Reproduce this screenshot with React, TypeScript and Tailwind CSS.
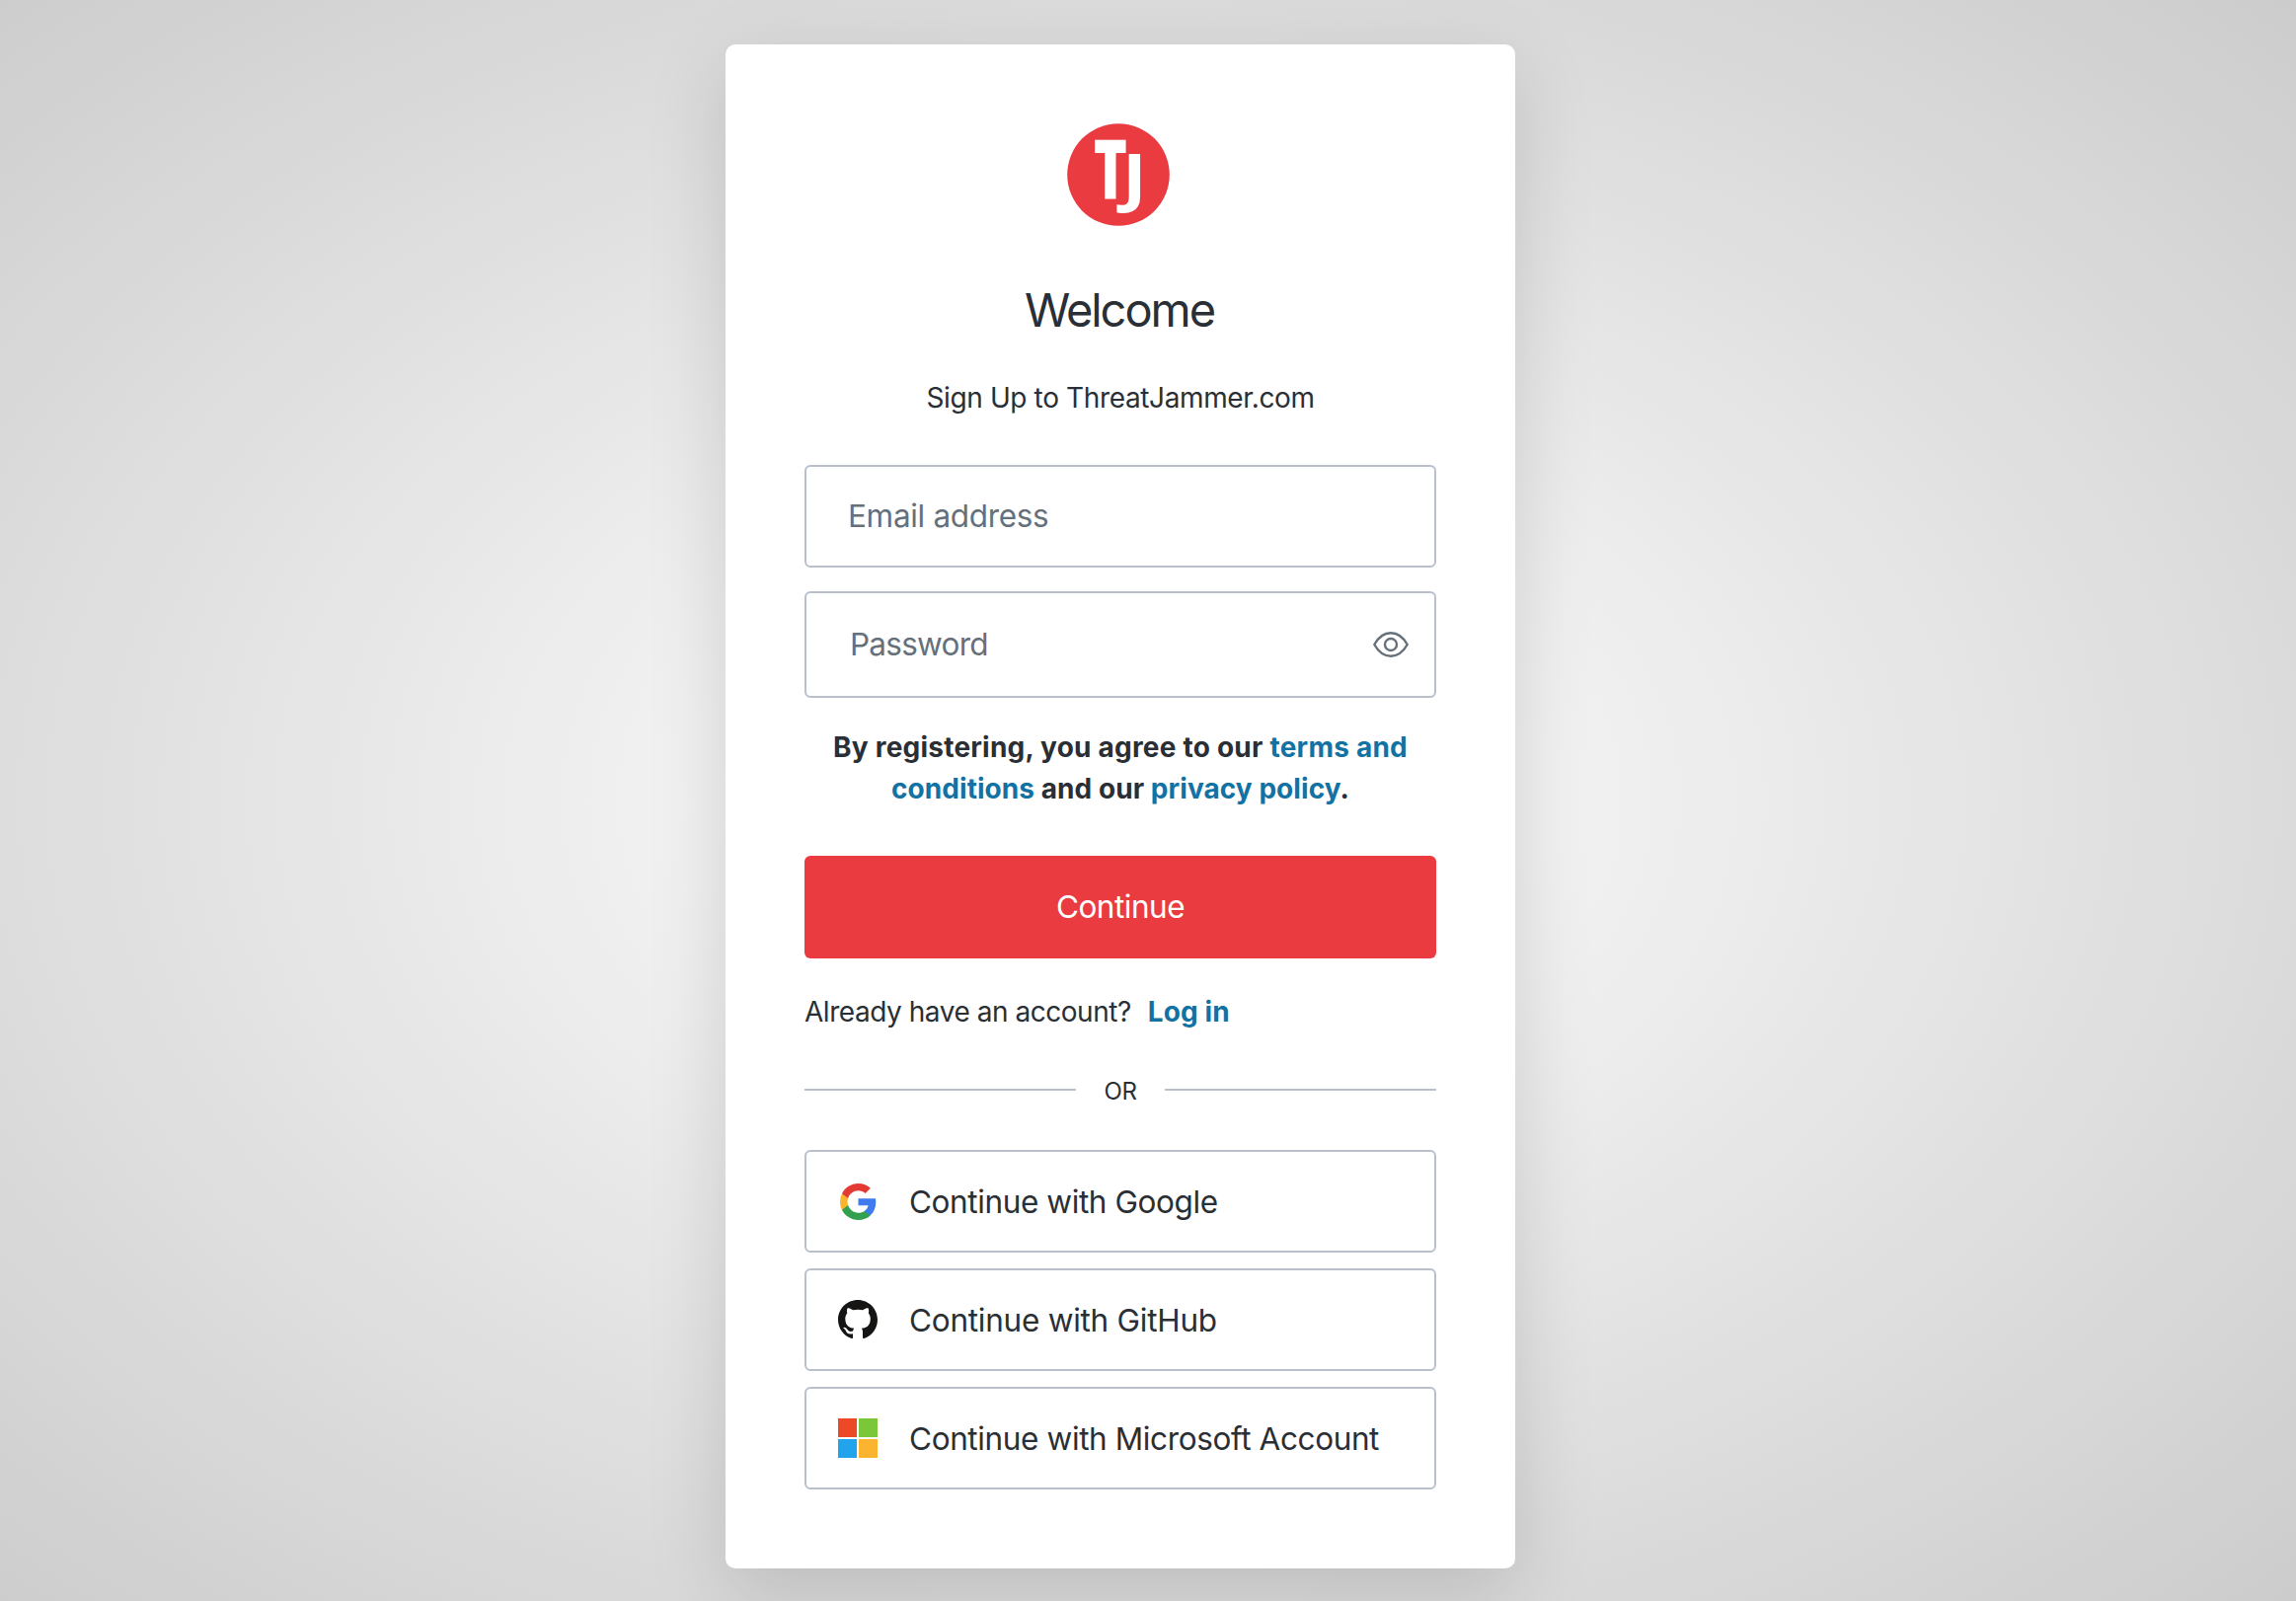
import type { ReactNode } from "react";

function Logo() {
  return (
    <svg className="block h-26 w-26 overflow-visible" viewBox="0 0 104 104" aria-label="ThreatJammer">
      <circle cx="52" cy="52" r="51.8" fill="#ea3b40" />
      <g fill="#fff" fontFamily="'Open Sans', sans-serif">
        <text transform="translate(26.7 76) scale(0.69 1)" fontSize="84" fontWeight="800">T</text>
        <text transform="translate(56 77) scale(1.15 1)" fontSize="65" fontWeight="700">J</text>
      </g>
    </svg>
  );
}

function EyeIcon() {
  return (
    <svg className="block h-[26px] w-9" viewBox="0 0 36 26" fill="none" stroke="#65707b" strokeWidth="2.4" strokeLinejoin="round">
      <path d="M1.3 13C5.5 5.5 10.5 1.3 18 1.3S30.5 5.5 34.7 13C30.5 20.5 25.5 24.7 18 24.7S5.5 20.5 1.3 13Z" />
      <circle cx="18" cy="13" r="6" />
    </svg>
  );
}

function GoogleIcon() {
  return (
    <svg className="block h-[37px] w-[37px]" viewBox="0 0 48 48">
      <path fill="#3f7bee" d="M47.1 24.55c0-1.64-.15-3.22-.42-4.73H24v9.02h12.95c-.58 2.96-2.25 5.47-4.78 7.15v6h7.73c4.52-4.18 7.2-10.33 7.2-17.44z" />
      <path fill="#32a04f" d="M24 48c6.48 0 11.93-2.13 15.89-5.81l-7.73-6c-2.15 1.45-4.92 2.3-8.16 2.3-6.26 0-11.57-4.22-13.47-9.91H2.56v6.19C6.51 42.62 14.62 48 24 48z" />
      <path fill="#fab52c" d="M10.53 28.58A14.5 14.5 0 0 1 9.75 24c0-1.59.28-3.14.76-4.59v-6.19H2.56A23.9 23.9 0 0 0 0 24c0 3.88.92 7.54 2.56 10.78z" />
      <path fill="#e43a34" d="M24 9.5c3.54 0 6.71 1.22 9.21 3.6l6.85-6.85C35.9 2.38 30.47 0 24 0 14.62 0 6.51 5.38 2.56 13.22l7.98 6.19C12.43 13.72 17.74 9.5 24 9.5z" />
    </svg>
  );
}

function GitHubIcon() {
  return (
    <svg className="block h-10 w-10" viewBox="0 0 16 16" fill="#161514">
      <path d="M8 0C3.58 0 0 3.58 0 8c0 3.54 2.29 6.53 5.47 7.59.4.07.55-.17.55-.38 0-.19-.01-.82-.01-1.49-2.01.37-2.53-.49-2.69-.94-.09-.23-.48-.94-.82-1.13-.28-.15-.68-.52-.01-.53.63-.01 1.08.58 1.23.82.72 1.21 1.87.87 2.33.66.07-.52.28-.87.51-1.07-1.78-.2-3.64-.89-3.64-3.95 0-.87.31-1.59.82-2.15-.08-.2-.36-1.02.08-2.12 0 0 .67-.21 2.2.82.64-.18 1.32-.27 2-.27s1.36.09 2 .27c1.53-1.04 2.2-.82 2.2-.82.44 1.1.16 1.92.08 2.12.51.56.82 1.27.82 2.15 0 3.07-1.87 3.75-3.65 3.95.29.25.54.73.54 1.48 0 1.07-.01 1.93-.01 2.2 0 .21.15.46.55.38A8.01 8.01 0 0 0 16 8c0-4.42-3.58-8-8-8z" />
    </svg>
  );
}

function MicrosoftIcon() {
  return (
    <div className="grid h-10 w-10 grid-cols-2 gap-0.5">
      <span className="bg-[#ec4a26]" />
      <span className="bg-[#7ac83a]" />
      <span className="bg-[#22a4ec]" />
      <span className="bg-[#fab42f]" />
    </div>
  );
}

function SocialButton({ icon, label, className }: { icon: ReactNode; label: string; className: string }) {
  return (
    <button className="flex h-26 w-full items-center rounded-md border-2 border-[#b9bfcb] pl-8 text-left">
      <span className="flex h-10 w-10 shrink-0 items-center justify-center">{icon}</span>
      <span className={`ml-8 pt-px text-[31.5px] leading-10 whitespace-nowrap ${className}`}>{label}</span>
    </button>
  );
}

export default function App() {
  return (
    <main className="h-[1622px] w-[2326px] overflow-hidden bg-[radial-gradient(ellipse_farthest-corner_at_1135px_811px,#ffffff,#cccccc)] pt-[45px] pl-[735px] font-[Inter,sans-serif] text-[#2a2f35]">
      <section className="flex h-[1544px] w-[800px] flex-col rounded-[10px] bg-white px-20 pt-20 shadow-[0_24px_80px_rgba(0,0,0,0.15)]">
        <div className="flex h-26 justify-center pr-1">
          <Logo />
        </div>
        <h1 className="mt-14 mb-px pr-0.5 text-center text-[47px] leading-[58px] font-normal tracking-[-2.05px]">Welcome</h1>
        <p className="mt-[38px] text-center text-[28px] leading-[42px] tracking-[-0.37px]">Sign Up to ThreatJammer.com</p>

        <div className="mt-[47px] flex h-26 items-center rounded-md border-2 border-[#b9bfcb] pl-[42px] text-[31.5px] tracking-[-0.32px] text-[#65707b]">
          Email address
        </div>
        <div className="mt-6 flex h-27 items-center justify-between rounded-md border-2 border-[#b9bfcb] pr-[26px] pl-11 text-[31.5px] tracking-[-0.75px] text-[#65707b]">
          <span>Password</span>
          <EyeIcon />
        </div>

        <p className="mt-[29px] text-center text-[28px] leading-[42px] font-bold tracking-[0.22px] whitespace-nowrap">
          By registering, you agree to our <a className="text-[#1272a3]">terms and</a>
          <br />
          <span className="tracking-[0.06px]">
            <a className="text-[#1272a3]">conditions</a> and our <a className="text-[#1272a3]">privacy policy</a>.
          </span>
        </p>

        <button className="mt-[47px] h-26 rounded-md bg-[#ea3b40] text-[31.5px] tracking-[-0.5px] text-white">Continue</button>

        <p className="mt-[33px] flex text-[28px] leading-[42px] tracking-[-0.46px]">
          Already have an account?
          <a className="ml-[17px] font-bold tracking-[0.1px] text-[#1272a3]">Log in</a>
        </p>

        <div className="mt-10 flex items-center justify-between">
          <span className="h-0.5 w-[275px] bg-[#b9bfcb]" />
          <span className="pt-1 text-2xl leading-8 tracking-[-0.35px]">OR</span>
          <span className="h-0.5 w-[275px] bg-[#b9bfcb]" />
        </div>

        <div className="mt-[43px] flex flex-col gap-4">
          <SocialButton icon={<GoogleIcon />} label="Continue with Google" className="tracking-[-0.4px]" />
          <SocialButton icon={<GitHubIcon />} label="Continue with GitHub" className="tracking-[-0.25px]" />
          <SocialButton icon={<MicrosoftIcon />} label="Continue with Microsoft Account" className="tracking-[-0.38px]" />
        </div>
      </section>
    </main>
  );
}
